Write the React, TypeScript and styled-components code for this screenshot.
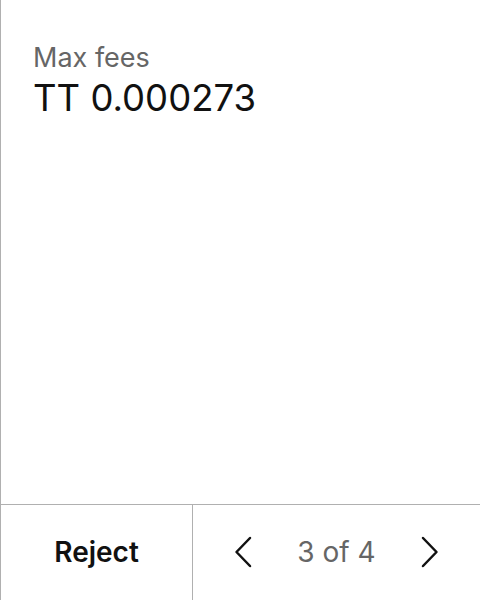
import React from 'react';
import styled, { createGlobalStyle } from 'styled-components';

const GlobalStyle = createGlobalStyle`
  html, body {
    margin: 0;
    padding: 0;
    background: #fff;
    font-family: Inter, "Noto Sans", sans-serif;
  }
`;

const Screen = styled.div`
  height: 600px;
  width: 480px;
  box-sizing: border-box;
  border-left: 1px solid #b0b0b0;
  display: flex;
  flex-direction: column;
`;

const Body = styled.div`
  flex: 1;
  padding: 42px 32px;
`;

const Label = styled.div`
  font-size: 27px;
  line-height: 32px;
  color: #666;
`;

const Amount = styled.div`
  font-size: 36.5px;
  line-height: 44px;
  color: #111;
  margin-top: 2px;
`;

const Footer = styled.div`
  height: 95px;
  border-top: 1px solid #b0b0b0;
  display: grid;
  grid-template-columns: 192px 1fr;
`;

const RejectButton = styled.button`
  border: 0;
  border-right: 1px solid #b0b0b0;
  background: none;
  font-family: inherit;
  font-size: 28px;
  font-weight: 600;
  color: #111;
  padding: 0 0 2px;
  cursor: pointer;
`;

const Pager = styled.div`
  display: flex;
  align-items: center;
  justify-content: space-between;
  padding: 0 37px 2px 37px;
`;

const Arrow = styled.button`
  border: 0;
  background: none;
  padding: 4px;
  display: flex;
  cursor: pointer;
`;

const Count = styled.span`
  font-size: 28px;
  color: #666;
`;

const Chevron = ({ dir }: { dir: 'left' | 'right' }) => (
  <svg width="18" height="32" viewBox="0 0 18 32" fill="none">
    <path
      d={dir === 'left' ? 'M16 2 L2.5 16 L16 30' : 'M2 2 L15.5 16 L2 30'}
      stroke="#111"
      strokeWidth="2.5"
      strokeLinecap="round"
      strokeLinejoin="round"
    />
  </svg>
);

export default function App() {
  return (
    <>
      <GlobalStyle />
      <Screen>
        <Body>
          <Label>Max fees</Label>
          <Amount>TT 0.000273</Amount>
        </Body>
        <Footer>
          <RejectButton>Reject</RejectButton>
          <Pager>
            <Arrow aria-label="Previous">
              <Chevron dir="left" />
            </Arrow>
            <Count>3 of 4</Count>
            <Arrow aria-label="Next">
              <Chevron dir="right" />
            </Arrow>
          </Pager>
        </Footer>
      </Screen>
    </>
  );
}
